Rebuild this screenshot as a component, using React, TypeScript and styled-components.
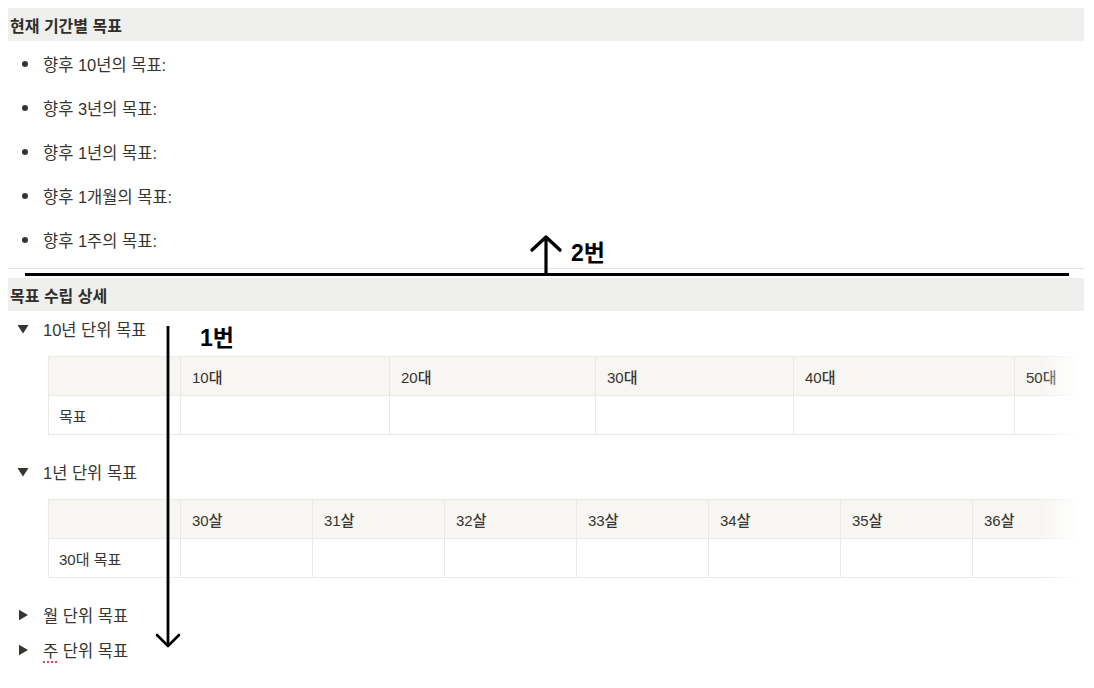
import React from 'react'
import styled, { createGlobalStyle } from 'styled-components'

const GlobalStyle = createGlobalStyle`
  html, body {
    margin: 0;
    padding: 0;
    background: #ffffff;
  }
  body {
    font-family: "Liberation Sans", "Noto Sans CJK KR", sans-serif;
    color: #37352f;
    -webkit-font-smoothing: antialiased;
  }
`

const goals = ['향후 10년의 목표:', '향후 3년의 목표:', '향후 1년의 목표:', '향후 1개월의 목표:', '향후 1주의 목표:']

const decades = [
  { label: '10대', width: 209 },
  { label: '20대', width: 206 },
  { label: '30대', width: 198 },
  { label: '40대', width: 221 },
  { label: '50대', width: 90 },
]

const ages = ['30살', '31살', '32살', '33살', '34살', '35살', '36살'].map((label) => ({ label, width: 132 }))

type Col = { label: string; width: number }

const Triangle = ({ open }: { open: boolean }) =>
  open ? (
    <svg width="12" height="10" viewBox="0 0 12 10">
      <polygon points="0.5,1 11.5,1 6,9.5" fill="#37352f" />
    </svg>
  ) : (
    <svg width="12" height="12" viewBox="0 0 12 12">
      <polygon points="2,0.8 11,6 2,11.2" fill="#37352f" />
    </svg>
  )

const GoalTable = ({ rowLabel, cols }: { rowLabel: string; cols: Col[] }) => (
  <TableWrap>
    <Table>
      <colgroup>
        <col style={{ width: 132 }} />
        {cols.map((c) => (
          <col key={c.label} style={{ width: c.width }} />
        ))}
      </colgroup>
      <thead>
        <tr>
          <Th />
          {cols.map((c) => (
            <Th key={c.label}>{c.label}</Th>
          ))}
        </tr>
      </thead>
      <tbody>
        <tr>
          <Td>{rowLabel}</Td>
          {cols.map((c) => (
            <Td key={c.label} />
          ))}
        </tr>
      </tbody>
    </Table>
    <Fade />
  </TableWrap>
)

const App = () => {
  return (
    <>
      <GlobalStyle />
      <Page>
        <Heading>현재 기간별 목표</Heading>
        <List>
          {goals.map((g) => (
            <Item key={g}>
              <Dot />
              <span>{g}</span>
            </Item>
          ))}
        </List>
        <Divider />
        <Heading>목표 수립 상세</Heading>

        <Toggle top={1}>
          <Arrow>
            <Triangle open />
          </Arrow>
          <span>10년 단위 목표</span>
        </Toggle>
        <GoalTable rowLabel="목표" cols={decades} />

        <Toggle top={1}>
          <Arrow>
            <Triangle open />
          </Arrow>
          <span>1년 단위 목표</span>
        </Toggle>
        <GoalTable rowLabel="30대 목표" cols={ages} />

        <Toggle top={20}>
          <Arrow>
            <Triangle open={false} />
          </Arrow>
          <span>월 단위 목표</span>
        </Toggle>
        <Toggle top={1}>
          <Arrow>
            <Triangle open={false} />
          </Arrow>
          <span>
            <Misspelled>주</Misspelled> 단위 목표
          </span>
        </Toggle>

        {/* annotations drawn over the page */}
        <BlackRule />
        <UpArrow width="40" height="44" viewBox="0 0 40 44">
          <path d="M18 3 L18 42" stroke="#000" strokeWidth="3.2" fill="none" />
          <path d="M4 16 L18 3 L32 16" stroke="#000" strokeWidth="3.4" fill="none" strokeLinecap="round" strokeLinejoin="round" />
        </UpArrow>
        <Note left={571} top={237}>2번</Note>
        <DownArrow width="30" height="326" viewBox="0 0 30 326">
          <path d="M15 0 L15 320" stroke="#000" strokeWidth="2.8" fill="none" />
          <path d="M4 309 L15 320 L26 309" stroke="#000" strokeWidth="2.6" fill="none" strokeLinecap="round" strokeLinejoin="round" />
        </DownArrow>
        <Note left={200} top={322}>1번</Note>
      </Page>
    </>
  )
}

export default App

const Page = styled.div`
  position: relative;
  width: 1094px;
  height: 688px;
  box-sizing: border-box;
  padding: 8px 10px 0 8px;
  overflow: hidden;
  font-size: 16.5px;
`

const Heading = styled.div`
  height: 33px;
  display: flex;
  align-items: center;
  padding-left: 2px;
  background: #efefed;
  font-weight: 700;
  font-size: 16px;
  color: #2f2e2a;
`

const List = styled.ul`
  list-style: none;
  margin: 1px 0 0;
  padding: 0;
`

const Item = styled.li`
  height: 44px;
  display: flex;
  align-items: center;
`

const Dot = styled.span`
  width: 6px;
  height: 6px;
  border-radius: 50%;
  background: #37352f;
  margin: 0 15px 0 14px;
`

const Divider = styled.div`
  height: 1px;
  background: #e3e2df;
  margin: 6px 0 9px;
`

const Toggle = styled.div<{ top?: number }>`
  height: 34px;
  margin-top: ${({ top }) => (top === undefined ? 0 : top)}px;
  display: flex;
  align-items: center;
`

const Arrow = styled.span`
  width: 35px;
  display: flex;
  align-items: center;
  padding-left: 9px;
  box-sizing: border-box;
`

const Misspelled = styled.span`
  text-decoration: underline dotted #e5484d;
  text-decoration-thickness: 2px;
  text-underline-offset: 4px;
`

const TableWrap = styled.div`
  position: relative;
  margin: 10px 0 20px 40px;
  overflow: hidden;
`

const Table = styled.table`
  border-collapse: collapse;
  table-layout: fixed;
  width: max-content;
  font-size: 15px;
`

const Th = styled.th`
  height: 39px;
  box-sizing: border-box;
  padding: 0 11px;
  text-align: left;
  font-weight: 500;
  background: #f7f6f3;
  border: 1px solid #e9e9e7;
  color: #37352f;
`

const Td = styled.td`
  height: 39px;
  box-sizing: border-box;
  padding: 0 10px;
  border: 1px solid #e9e9e7;
  color: #37352f;
`

const Fade = styled.div`
  position: absolute;
  top: 0;
  right: 0;
  bottom: 0;
  width: 44px;
  background: linear-gradient(to right, rgba(255, 255, 255, 0), #ffffff 90%);
`

const BlackRule = styled.div`
  position: absolute;
  left: 25px;
  top: 273px;
  width: 1044px;
  height: 3px;
  background: #000;
`

const UpArrow = styled.svg`
  position: absolute;
  left: 528px;
  top: 234px;
`

const DownArrow = styled.svg`
  position: absolute;
  left: 153px;
  top: 326px;
`

const Note = styled.div<{ left: number; top: number }>`
  position: absolute;
  left: ${({ left }) => left}px;
  top: ${({ top }) => top}px;
  font-size: 23px;
  font-weight: 700;
  color: #000;
  line-height: 32px;
`
